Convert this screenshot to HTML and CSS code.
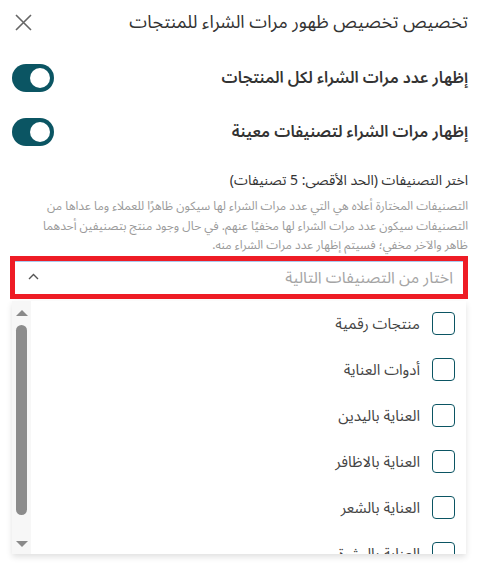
FILE: index.html
```html
<!DOCTYPE html>
<html lang="ar" dir="rtl">
<head>
<meta charset="utf-8">
<link rel="stylesheet" href="styles.css">
</head>
<body>
<div class="modal">
  <div class="header">
    <h1 class="title">تخصيص تخصيص ظهور مرات الشراء للمنتجات</h1>
    <button class="close" aria-label="إغلاق">
      <svg width="17" height="17" viewBox="0 0 17 17"><path d="M1 1L16 16M16 1L1 16" stroke="#666" stroke-width="1.6" fill="none"/></svg>
    </button>
  </div>

  <div class="toggle-row">
    <span class="toggle-label">إظهار عدد مرات الشراء لكل المنتجات</span>
    <span class="toggle"><span class="knob"></span></span>
  </div>
  <div class="toggle-row">
    <span class="toggle-label">إظهار مرات الشراء لتصنيفات معينة</span>
    <span class="toggle"><span class="knob"></span></span>
  </div>

  <div class="section">
    <div class="section-label">اختر التصنيفات (الحد الأقصى: 5 تصنيفات)</div>
    <p class="section-desc">التصنيفات المختارة أعلاه هي التي عدد مرات الشراء لها سيكون ظاهرًا للعملاء وما عداها من التصنيفات سيكون عدد مرات الشراء لها مخفيًا عنهم. في حال وجود منتج بتصنيفين أحدهما ظاهر والآخر مخفي؛ فسيتم إظهار عدد مرات الشراء منه.</p>
  </div>

  <div class="select">
    <div class="select-inner">
      <span class="placeholder">اختار من التصنيفات التالية</span>
      <svg class="chevron" width="11" height="7" viewBox="0 0 11 7"><path d="M1 6L5.5 1.5L10 6" stroke="#555" stroke-width="1.4" fill="none"/></svg>
    </div>
  </div>

  <div class="list">
    <div class="items">
      <label class="item"><span class="check"></span><span class="item-text">منتجات رقمية</span></label>
      <label class="item"><span class="check"></span><span class="item-text">أدوات العناية</span></label>
      <label class="item"><span class="check"></span><span class="item-text">العناية باليدين</span></label>
      <label class="item"><span class="check"></span><span class="item-text">العناية بالاظافر</span></label>
      <label class="item"><span class="check"></span><span class="item-text">العناية بالشعر</span></label>
      <label class="item"><span class="check"></span><span class="item-text">العناية بالبشرة</span></label>
    </div>
    <div class="scrollbar">
      <span class="arrow-up"></span>
      <span class="thumb"></span>
      <span class="arrow-down"></span>
    </div>
  </div>
</div>
</body>
</html>
```
FILE: styles.css
```css
* { box-sizing: border-box; }
html, body { margin: 0; padding: 0; background: #fff; }
body {
  font-family: "Noto Sans Arabic", "DejaVu Sans", sans-serif;
  color: #333;
  width: 478px;
  height: 564px;
  overflow: hidden;
}
.modal { padding: 0 10px; }
.header {
  height: 44px;
  display: flex;
  align-items: center;
  justify-content: space-between;
}
.title {
  margin: 0;
  font-size: 18px;
  font-weight: 400;
  color: #333;
}
.close {
  border: 0;
  background: none;
  padding: 0;
  margin-left: 5px;
  width: 17px;
  height: 17px;
  display: flex;
}
.toggle-row {
  height: 54px;
  display: flex;
  align-items: center;
  justify-content: space-between;
}
.header + .toggle-row { margin-top: 7px; }
.toggle-label {
  font-size: 16px;
  font-weight: 600;
  color: #333;
}
.toggle {
  width: 42px;
  height: 28px;
  border-radius: 14px;
  background: #0b5563;
  display: flex;
  align-items: center;
  justify-content: flex-end;
  padding: 0 4px;
  margin-left: 2px;
  direction: ltr;
}
.knob {
  width: 20px;
  height: 20px;
  border-radius: 50%;
  background: #fff;
}
.section { margin-top: 12px; }
.section-label {
  font-size: 14px;
  line-height: 20px;
  color: #333;
}
.section-desc {
  margin: 6px 0 0;
  padding-left: 8px;
  font-size: 12px;
  line-height: 19.5px;
  color: #9a9a9a;
}
.select {
  border: 5px solid #ee1c25;
  height: 43px;
}
.select-inner {
  height: 100%;
  border-top: 1px solid #a9c9ef;
  display: flex;
  align-items: center;
  justify-content: space-between;
  padding: 0 10px 0 13px;
}
.placeholder {
  font-size: 16px;
  color: #a5a5a5;
}
.chevron { margin-top: -2px; }
.list {
  margin: 2px 2px 0;
  height: 253px;
  display: flex;
  box-shadow: 0 3px 6px rgba(0,0,0,0.12);
  overflow: hidden;
}
.items {
  flex: 1;
  display: flex;
  flex-direction: column;
}
.item {
  height: 46px;
  flex: none;
  display: flex;
  align-items: center;
  gap: 12px;
  padding-right: 11px;
}
.check {
  width: 23px;
  height: 23px;
  border: 1.5px solid #0b5563;
  border-radius: 4px;
  flex: none;
}
.item-text {
  font-size: 15px;
  color: #444;
}
.scrollbar {
  width: 19px;
  background: #f7f7f7;
  display: flex;
  flex-direction: column;
  align-items: center;
  padding: 9px 0 7px;
}
.arrow-up, .arrow-down {
  width: 0;
  height: 0;
  border-left: 6px solid transparent;
  border-right: 6px solid transparent;
}
.arrow-up { border-bottom: 6px solid #8a8a8a; }
.arrow-down { border-top: 6px solid #8a8a8a; margin-top: auto; }
.thumb {
  margin-top: 9px;
  width: 11px;
  height: 190px;
  border-radius: 6px;
  background: #8c8c8c;
}
```
